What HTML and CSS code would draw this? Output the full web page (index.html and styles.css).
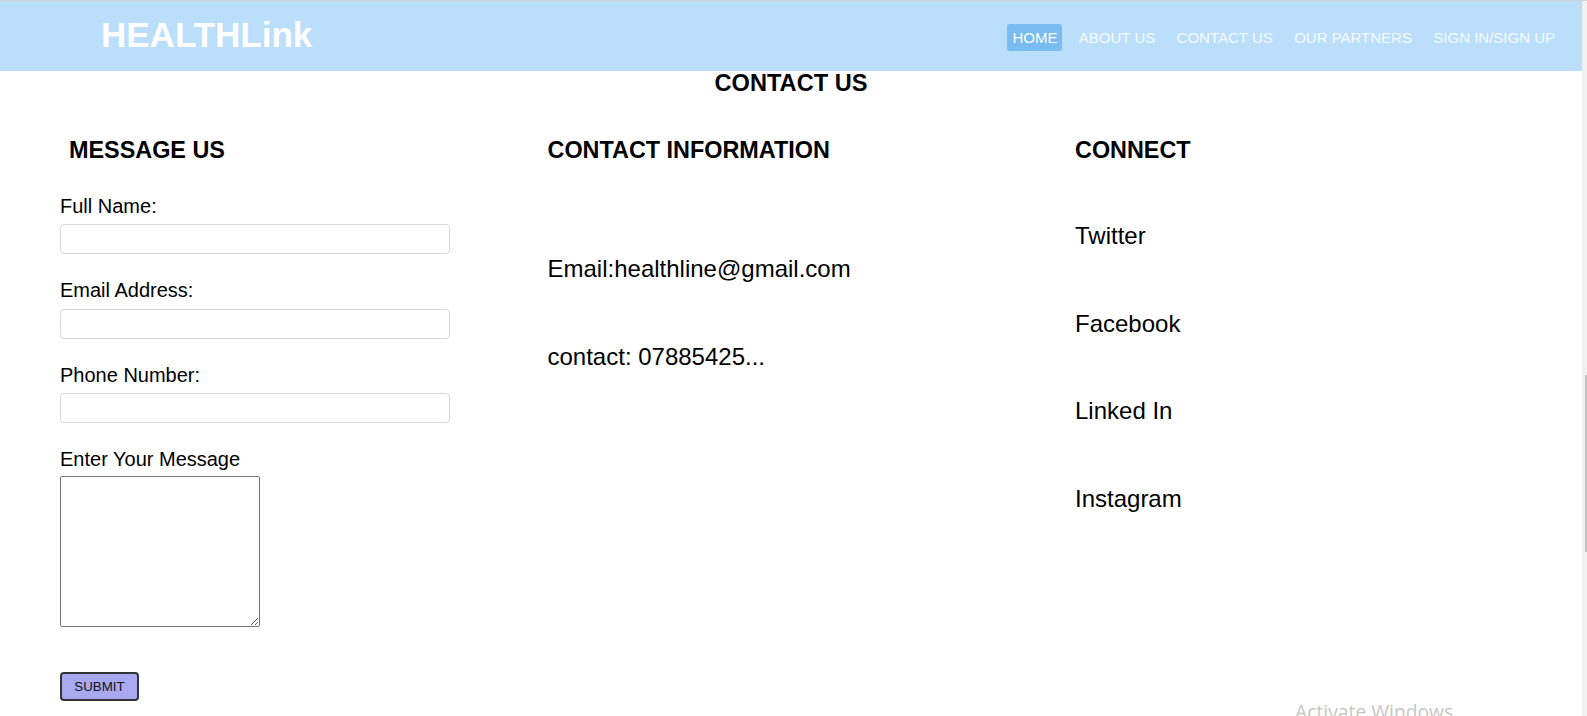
FILE: index.html
```html
<!DOCTYPE html>
<html lang="en">
<head>
<meta charset="utf-8">
<title>HEALTHLink - Contact Us</title>
<link rel="stylesheet" href="styles.css">
</head>
<body>
<div class="screen">
  <div class="page">
    <header class="topbar">
      <div class="logo">HEALTHLink</div>
      <nav class="nav">
        <a class="nav-link active" href="#">HOME</a>
        <a class="nav-link" href="#">ABOUT US</a>
        <a class="nav-link" href="#">CONTACT US</a>
        <a class="nav-link" href="#">OUR PARTNERS</a>
        <a class="nav-link" href="#">SIGN IN/SIGN UP</a>
      </nav>
    </header>
    <main class="main">
      <h2 class="title">CONTACT US</h2>
      <div class="columns">
        <section class="col">
          <h3 class="col-head indent">MESSAGE US</h3>
          <form class="form">
            <label class="field-label">Full Name:</label>
            <input class="field" type="text">
            <label class="field-label">Email Address:</label>
            <input class="field" type="text">
            <label class="field-label">Phone Number:</label>
            <input class="field" type="text">
            <label class="field-label tight">Enter Your Message</label>
            <textarea class="message"></textarea>
            <button class="submit" type="button">SUBMIT</button>
          </form>
        </section>
        <section class="col">
          <h3 class="col-head">CONTACT INFORMATION</h3>
          <p class="info first">Email:healthline@gmail.com</p>
          <p class="info">contact: 07885425...</p>
        </section>
        <section class="col">
          <h3 class="col-head">CONNECT</h3>
          <div class="social">
            <a class="social-link" href="#">Twitter</a>
            <a class="social-link" href="#">Facebook</a>
            <a class="social-link" href="#">Linked In</a>
            <a class="social-link" href="#">Instagram</a>
          </div>
        </section>
      </div>
    </main>
  </div>
  <div class="scrollbar"><div class="thumb"></div></div>
  <div class="watermark">Activate Windows</div>
</div>
</body>
</html>
```
FILE: styles.css
```css
html, body {
  margin: 0;
  padding: 0;
  height: 100%;
  overflow: hidden;
}

body {
  font-family: "Liberation Sans", Arial, sans-serif;
  font-size: 20px;
  color: #000;
  background: #fff;
}

.screen {
  display: flex;
  height: 716px;
  border-top: 1px solid #d3d3d3;
  box-sizing: border-box;
  position: relative;
}

.page {
  flex: 1;
  min-width: 0;
}

.topbar {
  height: 70px;
  background: #bbdefa;
  display: flex;
  align-items: center;
  justify-content: space-between;
  padding: 0 22px 0 101px;
}

.logo {
  font-size: 35px;
  font-weight: bold;
  color: #fff;
  line-height: 40px;
  margin-bottom: 3px;
}

.nav {
  display: flex;
  gap: 11.4px;
  margin-top: 3px;
}

.nav-link {
  font-size: 15px;
  line-height: 17px;
  padding: 5px;
  color: #f5faff;
  text-decoration: none;
  border-radius: 3px;
}

.nav-link.active {
  background: #78bcf1;
  color: #fff;
}

.title {
  margin: -1px 0 0;
  text-align: center;
  font-size: 23.6px;
  line-height: 27px;
  font-weight: bold;
}

.columns {
  display: grid;
  grid-template-columns: 487.5px 527.5px 1fr;
  padding-left: 60px;
  margin-top: 40.4px;
}

.col-head {
  margin: 0;
  font-size: 23.4px;
  line-height: 27px;
  font-weight: bold;
}

.indent {
  padding-left: 9px;
}

.form {
  display: flex;
  flex-direction: column;
  align-items: flex-start;
  margin-top: 30.2px;
}

.field-label {
  line-height: 23px;
  margin-bottom: 6.5px;
}

.field-label.tight {
  margin-bottom: 5px;
}

.field {
  width: 390px;
  height: 30px;
  box-sizing: border-box;
  border: 1px solid #d7d7d7;
  border-radius: 4px;
  margin: 0 0 25px;
  padding: 0 6px;
  background: #fff;
}

.message {
  width: 200px;
  height: 151px;
  box-sizing: border-box;
  border: 1px solid #767676;
  border-radius: 2px;
  margin: 0 0 44.5px;
  padding: 2px;
  background: #fff;
}

.submit {
  width: 79px;
  height: 29.5px;
  box-sizing: border-box;
  background: #a9a9f2;
  border: 2px solid #333;
  border-radius: 4px;
  font-family: "Liberation Sans", Arial, sans-serif;
  font-size: 13.33px;
  color: #111;
  padding: 0;
}

.info {
  font-size: 24px;
  line-height: 28px;
  margin: 60px 0 0;
}

.info.first {
  margin-top: 90.4px;
}

.social {
  display: flex;
  flex-direction: column;
  align-items: flex-start;
}

.social-link {
  font-size: 24px;
  line-height: 28px;
  margin-top: 59.4px;
  color: #000;
  text-decoration: none;
}

.social-link:first-child {
  margin-top: 58px;
}

.scrollbar {
  width: 5px;
  background: #f0f0f0;
}

.thumb {
  margin: 374px 0 0 3px;
  width: 2px;
  height: 177px;
  background: #c1c1c1;
}

.watermark {
  position: absolute;
  left: 1295px;
  top: 698px;
  font-family: "Open Sans", "Noto Sans", sans-serif;
  font-size: 19.3px;
  line-height: 26px;
  color: #c6c6c6;
  white-space: nowrap;
}
```
